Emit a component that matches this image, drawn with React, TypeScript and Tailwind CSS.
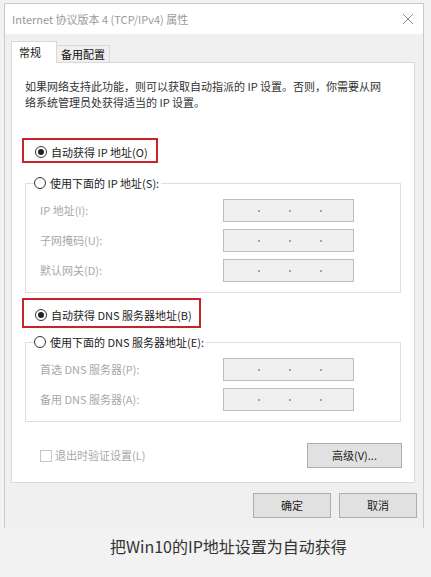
import type { ReactNode } from "react";

const FONT = "font-['Noto_Sans_CJK_SC','Noto_Sans',sans-serif]";

function Radio({ checked = false }: { checked?: boolean }) {
  return (
    <span className="flex h-[12px] w-[12px] shrink-0 items-center justify-center rounded-full border border-[#333] bg-white">
      {checked && <span className="h-[6px] w-[6px] rounded-full bg-[#222]" />}
    </span>
  );
}

function IpBox() {
  return (
    <div className="flex h-[23px] w-[131px] items-center border border-[#bdbdbd] bg-[#f0f0f0] pl-[34px]">
      <span className="h-[2px] w-[2px] rounded-full bg-[#8a8a8a]" />
      <span className="ml-[29px] h-[2px] w-[2px] rounded-full bg-[#8a8a8a]" />
      <span className="ml-[29px] h-[2px] w-[2px] rounded-full bg-[#8a8a8a]" />
    </div>
  );
}

function FieldRow({ label }: { label: string }) {
  return (
    <div className="flex items-center">
      <span className="w-[197px] pl-[14px] text-[#a8a8a8]">{label}</span>
      <IpBox />
    </div>
  );
}

function Group({ legend, children }: { legend: string; children: ReactNode }) {
  return (
    <fieldset className="mx-[13px] border border-[#dedede] px-0">
      <legend className="ml-[8px] flex items-center gap-[4px] bg-white pr-[2px] leading-[16px] text-[#222]">
        <Radio />
        <span>{legend}</span>
      </legend>
      {children}
    </fieldset>
  );
}

function RedBox({
  width,
  height,
  children,
}: {
  width: string;
  height: string;
  children: ReactNode;
}) {
  return (
    <div
      className={`ml-[10px] flex items-end border-2 border-[#c8232c] pl-[11px] ${width} ${height}`}
    >
      {children}
    </div>
  );
}

function WinButton({ label, className }: { label: string; className: string }) {
  return (
    <button
      className={`flex h-[25px] items-center justify-center border border-[#adadad] bg-[#e1e1e1] text-[11px] text-[#222] ${className}`}
      type="button"
    >
      {label}
    </button>
  );
}

export default function App() {
  return (
    <div className={`h-[577px] w-[431px] bg-[#f2f2f2] pt-[3px] ${FONT}`}>
      <div className="ml-[4px] flex h-[525px] w-[420px] flex-col border-x border-t border-[#c9c9c9] bg-[#f0f0f0] text-[11px]">
        {/* title bar */}
        <div className="flex h-[30px] items-center justify-between bg-white pl-[7px] pr-[10px]">
          <span className="text-[#9a9a9a]">Internet 协议版本 4 (TCP/IPv4) 属性</span>
          <svg className="h-[10px] w-[10px]" fill="none" stroke="#8a8a8a" strokeWidth={1} viewBox="0 0 10 10">
            <path d="M0 0L10 10M10 0L0 10" />
          </svg>
        </div>

        {/* tabs */}
        <div className="mt-[7px] flex items-end pl-[6px]">
          <div className="relative z-10 -mb-px flex h-[22px] w-[46px] items-center border-x border-t border-[#d9d9d9] bg-white pl-[7px] text-[#111]">
            常规
          </div>
          <div className="flex h-[17px] w-[53px] items-center border-r border-t border-[#d9d9d9] bg-[#f0f0f0] pl-[4px] text-[#111]">
            备用配置
          </div>
        </div>

        {/* panel */}
        <div className="ml-[6px] flex h-[421px] w-[404px] flex-col border border-[#d9d9d9] bg-white">
          <p className="pl-[13px] pt-[15px] leading-[16px] text-[#333]">
            如果网络支持此功能，则可以获取自动指派的 IP 设置。否则，你需要从网
            <br />
            络系统管理员处获得适当的 IP 设置。
          </p>

          <div className="mt-[28px]">
            <RedBox height="h-[25px]" width="w-[136px]">
              <div className="mb-[1px] flex items-center gap-[4px] leading-[16px] text-[#222]">
                <Radio checked />
                <span>自动获得 IP 地址(O)</span>
              </div>
            </RedBox>
          </div>

          <div className="mt-[12px]">
            <Group legend="使用下面的 IP 地址(S):">
              <div className="flex flex-col gap-[7px] pb-[10px] pt-[8px]">
                <FieldRow label="IP 地址(I):" />
                <FieldRow label="子网掩码(U):" />
                <FieldRow label="默认网关(D):" />
              </div>
            </Group>
          </div>

          <div className="mt-[5px]">
            <RedBox height="h-[30px]" width="w-[179px]">
              <div className="mb-[3px] flex items-center gap-[4px] leading-[16px] text-[#222]">
                <Radio checked />
                <span>自动获得 DNS 服务器地址(B)</span>
              </div>
            </RedBox>
          </div>

          <div className="mt-[6px]">
            <Group legend="使用下面的 DNS 服务器地址(E):">
              <div className="flex flex-col gap-[7px] pb-[10px] pt-[8px]">
                <FieldRow label="首选 DNS 服务器(P):" />
                <FieldRow label="备用 DNS 服务器(A):" />
              </div>
            </Group>
          </div>

          <div className="mt-[21px] flex items-center justify-between pl-[28px] pr-[12px]">
            <div className="flex items-center gap-[3px] text-[#a8a8a8]">
              <span className="h-[12px] w-[12px] border border-[#c4c4c4] bg-white" />
              <span>退出时验证设置(L)</span>
            </div>
            <WinButton className="w-[95px]" label="高级(V)..." />
          </div>
        </div>

        {/* footer buttons */}
        <div className="mt-[10px] flex justify-end gap-[8px] pr-[6px]">
          <WinButton className="w-[78px]" label="确定" />
          <WinButton className="w-[78px]" label="取消" />
        </div>
      </div>

      {/* caption */}
      <div className="pl-[110px] pt-[6px] text-[16px] leading-[24px] text-[#333]">
        把Win10的IP地址设置为自动获得
      </div>
    </div>
  );
}
